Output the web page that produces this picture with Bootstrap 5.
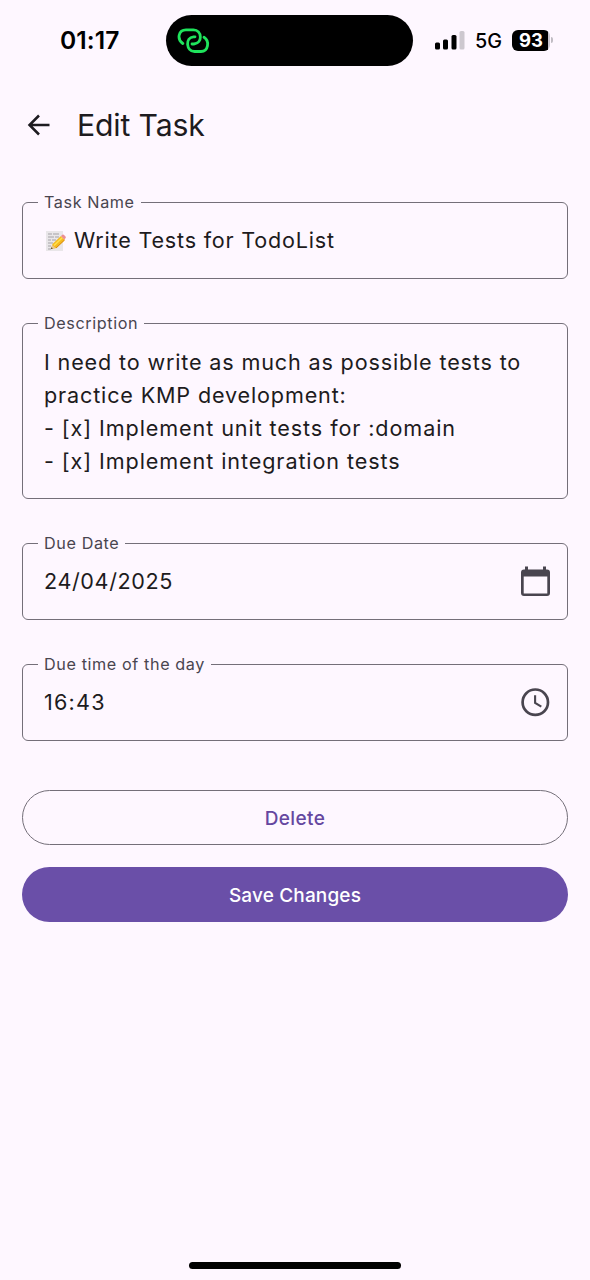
<!DOCTYPE html>
<html lang="en">
<head>
<meta charset="utf-8">
<meta name="viewport" content="width=device-width, initial-scale=1">
<title>Edit Task</title>
<link href="https://cdn.jsdelivr.net/npm/bootstrap@5.3.0/dist/css/bootstrap.min.css" rel="stylesheet">
<style>
  body { background: #fef7ff; color: #1d1b20; font-family: Inter, "Liberation Sans", sans-serif; }
  .screen { height: 1280px; overflow: hidden; }
  .status-bar { height: 98px; color: #000; }
  .clock { width: 166px; padding-left: 60px; padding-top: 22px; font-size: 24.6px; font-weight: 600; letter-spacing: .1px; }
  .island { width: 247px; height: 51px; margin-top: 15px; background: #000; padding-left: 11px; }
  .signals { padding-left: 22px; height: 49px; }
  .signal-bars { margin-bottom: 2px; }
  .network { font-size: 19.8px; font-weight: 500; margin-left: 10px; margin-top: 2px; width: 28px; }
  .battery { width: 38px; height: 21px; border-radius: 6px; font-size: 18.5px; font-weight: 700; background: linear-gradient(90deg, #000 36px, #c9c4cc 36px); color: #fff; margin-left: 9px; margin-top: -1px; padding-top: 1px; }
  .battery-tip { width: 2px; height: 6px; margin-left: 1px; margin-top: -1px; border-radius: 0 2px 2px 0; background: #c0bcc3; }
  .title-bar { height: 54px; padding-left: 26px; gap: 26px; }
  .title-bar h1 { font-size: 30.2px; font-weight: 400; letter-spacing: -.15px; line-height: 54px; }
  .task-form { padding: 40px 22px 0; gap: 34px; }
  .outlined { height: 87px; border: 1px solid #746f79; border-radius: 6px; padding: 0 17px 0 21px; }
  .outlined.tall { height: 186px; }
  .outlined legend { float: none; width: auto; height: 21px; line-height: 21px; font-size: 16.2px; letter-spacing: .6px; color: #49454f; padding: 0 6px; margin: 0 0 0 -6px; }
  .value { font-size: 21.6px; letter-spacing: .78px; line-height: 33px; margin-top: 11px; white-space: nowrap; }
  .notes { letter-spacing: .84px; margin-top: 11.5px; }
  .check-line { letter-spacing: .9px; }
  .date-text { letter-spacing: .6px; }
  .time-text { letter-spacing: 1.2px; }
  .pill { height: 55px; font-size: 19px; font-weight: 500; letter-spacing: .15px; padding-top: 9px; }
  .pill-outline { border: 1px solid #746f79; color: #65479f; letter-spacing: .4px; }
  .pill-filled { background: #6a4fa8; color: #fff; }
  .actions { gap: 22px; margin-top: 15px; }
  .home-bar { width: 212px; height: 7px; background: #000; margin-bottom: 11px; }
</style>
</head>
<body>
<div class="screen d-flex flex-column">
  <header class="status-bar d-flex align-items-start flex-shrink-0">
    <div class="clock">01:17</div>
    <div class="island rounded-pill d-flex align-items-center">
      <svg width="34" height="26" viewBox="0 0 34 26" fill="none" stroke="#1fe45c" stroke-width="2.8" stroke-linecap="round">
        <path d="M5.800 15.500C-.5 11 1.500 1.800 9 1.800h7.500c8.500 0 9.500 13.500.5 14.200h-2"/>
        <path d="M18 8.800h-1.500c-8.500.7-7.500 14.700 1 14.700h6.500c7.500 0 8.800-10.500 3-14.200"/>
      </svg>
    </div>
    <div class="signals d-flex align-items-center mt-3">
      <svg class="signal-bars" width="30" height="20" viewBox="0 0 30 20"><g fill="#000"><rect x="0" y="12.500" width="5" height="7" rx="1.500"/><rect x="8" y="9.500" width="5" height="10" rx="1.500"/><rect x="16.500" y="5" width="5" height="14.500" rx="1.500"/></g><rect x="24.500" y="1" width="5" height="18.500" rx="1.500" fill="#cdc8cf"/></svg>
      <span class="network">5G</span>
      <span class="battery d-flex align-items-center justify-content-center">93</span>
      <span class="battery-tip"></span>
    </div>
  </header>

  <div class="title-bar d-flex align-items-center flex-shrink-0">
    <svg width="25" height="24" viewBox="0 0 25 24" fill="none" stroke="#1d1b20" stroke-width="2.500"><path d="M23.500 12H4M13 2.500 3.500 12l9.500 9.500"/></svg>
    <h1 class="m-0">Edit Task</h1>
  </div>

  <form class="task-form d-flex flex-column">
    <fieldset class="outlined">
      <legend>Task Name</legend>
      <div class="value d-flex align-items-center">
        <svg class="me-2" width="22" height="22" viewBox="0 0 22 22">
          <path d="M2 1h17v20H2z" fill="#e9e6e9"/>
          <path d="M4 4h4m1 0h6M4 7h6m1 0h4M4 10h3m1 0h4M4 13h5M4 16h3M4 19h3" stroke="#a5a2a7" stroke-width="1"/>
          <path d="m7 19 1.500-5L17 6l4 4-8.500 8z" fill="#f5b91f"/>
          <path d="m10 15.500 8.500-8" stroke="#ffe04d" stroke-width="1.600"/>
          <path d="m12 18 8.500-8" stroke="#d98b16" stroke-width="1"/>
          <path d="m7 19 1.200-4 3.300 3z" fill="#e8c594"/><path d="m7 19 .5-1.800 1.300 1.300z" fill="#332"/>
          <path d="m17 6 1.300-1.200q1-.6 2 .4l1.200 1.200q.8 1-.2 2L20 9.500z" fill="#ec8f94"/>
        </svg><span>Write Tests for TodoList</span>
      </div>
    </fieldset>
    <fieldset class="outlined tall">
      <legend>Description</legend>
      <div class="value notes">I need to write as much as possible tests to<br>practice KMP development:<br><span class="check-line">- [x] Implement unit tests for :domain<br>- [x] Implement integration tests</span></div>
    </fieldset>
    <fieldset class="outlined">
      <legend>Due Date</legend>
      <div class="value d-flex align-items-center justify-content-between">
        <span class="date-text">24/04/2025</span>
        <svg width="29" height="33" viewBox="0 0 29 33"><path fill="#49454f" fill-rule="evenodd" d="M4 1.500h3v3h15v-3h3v3h1q3 0 3 3v20.500q0 3-3 3H3q-3 0-3-3V7.500q0-3 3-3h1zM2.700 11.500v17h23.600v-17z"/></svg>
      </div>
    </fieldset>
    <fieldset class="outlined">
      <legend>Due time of the day</legend>
      <div class="value d-flex align-items-center justify-content-between">
        <span class="time-text">16:43</span>
        <svg width="29" height="29" viewBox="0 0 29 29" fill="none" stroke="#49454f"><circle cx="14.300" cy="14.200" r="12.700" stroke-width="2.700"/><path d="M14.100 7.200v7.700l6.200 3.700" stroke-width="2.100"/></svg>
      </div>
    </fieldset>
    <div class="actions d-flex flex-column">
      <button type="button" class="btn rounded-pill pill pill-outline">Delete</button>
      <button type="button" class="btn rounded-pill pill pill-filled">Save Changes</button>
    </div>
  </form>
  <div class="home-bar rounded-pill mt-auto mx-auto"></div>
</div>
<script src="https://cdn.jsdelivr.net/npm/bootstrap@5.3.0/dist/js/bootstrap.bundle.min.js"></script>
</body>
</html>
